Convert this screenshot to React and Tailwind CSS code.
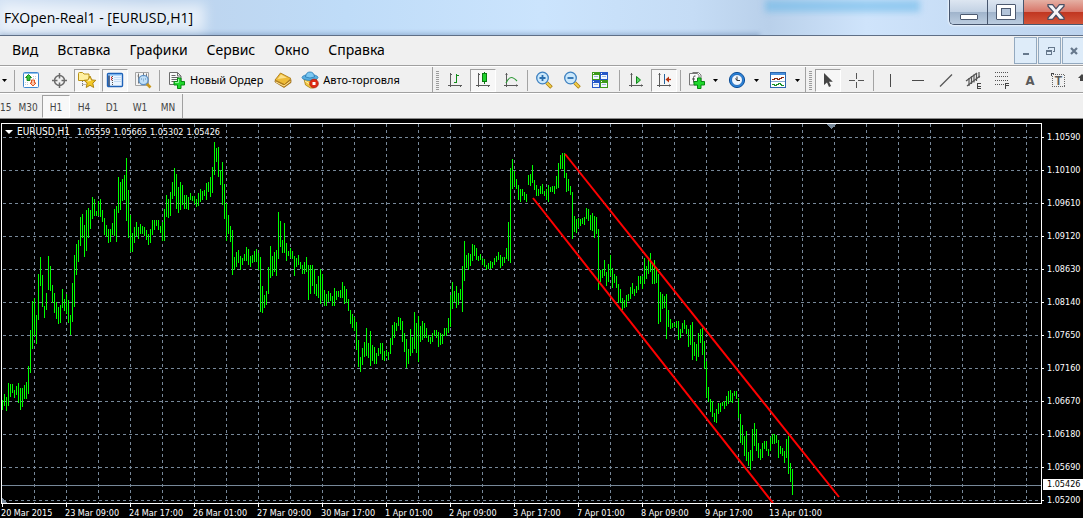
import React from "react";

const MENU = ["Вид", "Вставка", "Графики", "Сервис", "Окно", "Справка"];
const TIMEFRAMES = ["M30", "H1", "H4", "D1", "W1", "MN"];

const PRICES = [
  "1.10590", "1.10100", "1.09610", "1.09120", "1.08630", "1.08140",
  "1.07650", "1.07160", "1.06670", "1.06180", "1.05690", "1.05200",
];

const DATES = [
  "20 Mar 2015", "23 Mar 09:00", "24 Mar 17:00", "26 Mar 01:00", "27 Mar 09:00",
  "30 Mar 17:00", "1 Apr 01:00", "2 Apr 09:00", "3 Apr 17:00", "7 Apr 01:00",
  "8 Apr 09:00", "9 Apr 17:00", "13 Apr 01:00",
];

// high-low of every bar, in pixels below the top of the window
const CHART_TOP = 124;
const BARS = `
400-410 394-406 397-411 383-406 384-397 384-393 390-398 386-395 383-403 388-410
388-407 385-399 382-399 366-394 330-373 301-349 298-336 315-344 274-320 257-286
275-307 306-318 293-310 256-290 266-291 285-303 293-313 302-319 307-324 305-323
289-308 299-311 294-314 300-323 315-335 283-322 255-307 244-275 240-262 217-246
214-238 225-257 210-251 208-238 210-229 197-219 199-216 211-216 201-216 199-217
210-222 218-235 225-237 229-243 229-242 223-235 209-236 206-242 177-213 182-210
179-201 175-200 158-221 190-238 215-252 233-252 227-243 222-236 227-239 224-234
226-234 227-236 230-240 234-245 229-243 220-235 220-230 220-226 220-230 226-233
222-241 209-241 195-217 199-218 192-216 182-199 168-196 174-209 187-213 182-210
185-205 195-209 195-209 197-210 193-200 196-201 196-204 199-207 193-206 189-202
191-200 190-196 183-200 182-192 177-197 167-193 142-175 148-162 147-177 170-185
162-205 184-219 203-241 215-234 226-242 230-275 257-270 252-267 250-263 256-270
258-265 254-261 247-261 249-265 256-267 255-263 251-262 249-262 253-270 257-312
286-313 295-308 291-305 267-294 246-278 256-276 252-272 250-276 212-259 221-247
240-253 223-253 243-261 251-256 248-258 251-259 256-276 258-267 255-265 262-269
265-274 262-274 257-272 265-300 265-294 265-286 269-294 284-296 276-298 269-304
274-300 290-306 294-306 291-302 293-301 296-306 288-306 291-300 291-297 290-298
282-298 286-304 289-303 299-311 310-324 314-328 317-331 322-350 340-367 357-372
348-365 342-357 328-356 343-358 331-366 345-361 347-364 353-364 348-356 343-354
343-360 351-361 350-356 352-360 338-354 325-345 322-338 323-331 317-326 318-330
321-342 333-352 339-368 349-364 329-356 337-353 312-349 323-353 316-362 326-342
321-340 323-338 328-338 335-342 337-344 333-342 330-336 330-338 332-347 333-345
334-344 328-336 328-336 318-333 295-327 282-309 291-302 286-308 293-305 289-300
266-312 241-281 255-268 253-270 254-266 244-261 245-256 248-260 256-261 254-260
258-265 259-267 265-270 263-269 261-269 262-268 258-265 256-262 252-260 255-268
257-266 257-263 248-259 222-261 168-263 159-189 171-186 179-189 185-200 189-202
189-196 192-200 194-202 175-185 174-186 165-183 180-190 185-196 189-196 186-194
184-194 191-196 189-200 185-202 187-192 186-192 186-194 176-189 163-188 155-169
153-169 153-178 173-192 179-191 186-195 192-239 216-232 219-233 218-228 219-226
218-224 217-225 208-219 209-221 215-230 213-231 216-238 217-234 229-290 270-282
269-278 260-276 272-286 264-282 255-276 268-288 274-283 276-288 284-303 289-303
298-310 300-308 295-307 294-301 287-299 283-294 289-296 286-293 276-290 276-284
276-289 258-284 266-279 258-274 253-272 264-284 260-284 267-283 274-324 292-322
294-309 296-308 294-339 310-327 319-329 323-328 323-327 321-328 321-340 329-338
323-333 320-329 325-334 329-347 325-345 322-360 342-356 344-361 333-357 329-343
328-355 341-369 361-398 387-402 399-412 401-417 413-422 409-423 403-414 403-412
402-406 401-409 396-406 391-404 390-402 393-403 391-396 391-399 398-418 414-443
425-445 436-456 431-461 452-466 450-470 429-461 423-446 429-451 443-458 449-460
443-458 441-449 441-451 449-456 437-451 434-444 434-444 435-443 440-458 446-454
448-456 451-463 439-458 436-474 463-482 469-495`
  .trim()
  .split(/\s+/)
  .map((bar) => bar.split("-").map((y) => Number(y) - CHART_TOP));

function Svg({ children, crisp }) {
  return (
    <svg className="block h-[18px] w-[18px] shrink-0" viewBox="0 0 18 18" fill="none" shapeRendering={crisp ? "crispEdges" : "auto"}>
      {children}
    </svg>
  );
}

/* ---------- toolbar icons ---------- */

const MarketWatch = () => (
  <Svg>
    <rect x="1.5" y="1.5" width="15" height="15" rx="1" fill="#fff" stroke="#3f87cf" />
    <path d="M2 2.500h14" stroke="#8fc1ee" />
    <path d="M11 5.500h4M11 7.500h4M3 11.500h3M3 13.500h3" stroke="#c4cdd6" strokeDasharray="1 1" />
    <path d="M6.500 3.500l3 3H8v3H5v-3H3.500z" fill="#3cc43c" stroke="#0c7f12" strokeWidth=".9" />
    <path d="M11 15l-3-3h1.500V9h3v3H14z" fill="#ffc4a4" stroke="#e04a12" strokeWidth=".9" />
  </Svg>
);

const Target = () => (
  <Svg>
    <circle cx="9.500" cy="9.500" r="5" stroke="#6a6a6a" strokeWidth="1.5" />
    <path d="M9.500 2v5.500M9.500 11.500V17M2 9.500h5.500M11.500 9.500H17" stroke="#6a6a6a" strokeWidth="1.5" />
  </Svg>
);

const FolderStar = () => (
  <Svg>
    <path d="M.5 2.500q0-1 1-1h3l1.500 1.500h5v6.500H.5z" fill="#fff0a0" stroke="#b99316" />
    <path d="M4.500 10v6M4.500 13.500h3" stroke="#777" strokeDasharray="1 1" />
    <path d="M12 5l1.800 3.900 4 .4-3 2.900.9 4.300-3.700-2.200-3.800 2.200.9-4.300-3-2.900 4.100-.4z" fill="#f4c928" stroke="#a87d08" strokeWidth=".9" />
    <path d="M12 7l1 3-4 .5z" fill="#fff3b0" />
  </Svg>
);

const Navigator = () => (
  <Svg>
    <rect x="1.500" y="2.500" width="15" height="13" rx="1" fill="#eaf4ff" stroke="#1e62b8" strokeWidth="1.400" />
    <path d="M2.500 3.800h13" stroke="#6caef0" strokeWidth="1.300" />
    <path d="M3 4.500v10.500" stroke="#2a4a78" strokeWidth="1.600" />
    <path d="M6.500 5v10" stroke="#555" strokeDasharray="1 1" />
    <path d="M5 6.500h1M5 8.500h1" stroke="#d22" strokeWidth="1.300" />
    <path d="M8 6.500h7M8 8.500h7M8 10.500h7" stroke="#c3dcf5" />
  </Svg>
);

const Tester = () => (
  <Svg>
    <path d="M1.500 1.500h13v13h-13z" fill="#f4f4f4" stroke="#a4a4a4" />
    <path d="M4.500 2.500v10M3.500 5h1M4.500 9h1.500M9.500 2v4M12.500 2.500v3" stroke="#777" />
    <path d="M12.500 12.500l4 4" stroke="#c9971c" strokeWidth="2.600" />
    <circle cx="9.500" cy="9" r="4.600" fill="#b7dcf8" fillOpacity=".85" stroke="#5c8fc4" strokeWidth="1.300" />
    <path d="M7.500 9V7M9.500 10.500V7.500M11.500 9V7" stroke="#8cb4d8" />
  </Svg>
);

const NewOrder = () => (
  <Svg>
    <path d="M1.500 1.500h8l3.500 3.500v8.500h-11.500z" fill="#fafafa" stroke="#6c6c6c" />
    <path d="M9.500 1.500v3.500h3.500" stroke="#6c6c6c" />
    <path d="M3.500 4.500h4M3.500 6.500h7M3.500 8.500h7M3.500 10.500h4" stroke="#666" />
    <path d="M9.500 7h3.500v3.500h3.500v3.500h-3.500v3.500h-3.500v-3.500h-3.500v-3.500h3.500z" fill="#1fd82d" stroke="#078a12" />
    <path d="M10.500 8v3.500h-3.500" stroke="#9cf7a2" />
  </Svg>
);

const GoldBook = () => (
  <Svg>
    <path d="M1 9.500l9 4 7-5v3l-7 5-9-5.500z" fill="#c98d18" stroke="#8c5c08" strokeWidth=".7" />
    <path d="M1.500 10.800l8.500 4.200 6.500-4.800" stroke="#ffe9a8" />
    <path d="M1 9l5.500-7 10.500 5.500-6.500 6z" fill="#eebb38" stroke="#a5720c" strokeWidth=".8" />
    <path d="M3.500 8l3.500-4.500 6 3.200z" fill="#fbe08a" />
  </Svg>
);

const Expert = () => (
  <Svg>
    <path d="M3 8l1.500 6 5 3h3l2-3 1-6z" fill="#f2c640" stroke="#a87c10" strokeWidth=".8" />
    <path d="M4 10l4 2.500 7-2" stroke="#fff0b0" />
    <ellipse cx="9" cy="6.500" rx="8" ry="2.900" fill="#58aee0" stroke="#2478b4" strokeWidth=".8" />
    <path d="M4.500 6q.5-5 4.500-5t4.500 5q-4.500 2-9 0z" fill="#7cc8f2" stroke="#2478b4" strokeWidth=".8" />
    <circle cx="13" cy="12.500" r="4.400" fill="#dd2b15" stroke="#a51b0a" strokeWidth=".6" />
    <rect x="11.500" y="11" width="3" height="3" fill="#fff" />
  </Svg>
);

const Axes = () => (
  <path d="M4.500 2v14M2 14.500h14M3.500 3.500h2M14.500 13.500v2" stroke="#5a5a5a" />
);

const BarChart = () => (
  <Svg crisp>
    <Axes />
    <path d="M10.500 3v9M10.500 4.500h2M8 11.500h2.500" stroke="#118a18" />
  </Svg>
);

const CandleChart = () => (
  <Svg crisp>
    <Axes />
    <path d="M10.500 1v12" stroke="#0a7a12" />
    <rect x="8.500" y="2.500" width="4" height="8" fill="#1fd12b" stroke="#0a7a12" />
  </Svg>
);

const LineChart = () => (
  <Svg>
    <Axes />
    <path d="M4 12q2.500-5.500 5.500-5.500 2 0 5.500 3.500" stroke="#2f9a38" strokeWidth="1.200" />
  </Svg>
);

const Magnifier = ({ plus }) => (
  <Svg>
    <path d="M11.500 11.500l5 5" stroke="#a97c0e" strokeWidth="3.600" />
    <path d="M11.500 11.500l4.500 4.500" stroke="#f3cf4a" strokeWidth="2" />
    <circle cx="7.500" cy="7" r="5.800" fill="#cbe8fb" stroke="#3d80c0" strokeWidth="1.300" />
    <path d={plus ? "M4.500 7h6M7.500 4v6" : "M4.500 7h6"} stroke="#2a6eae" strokeWidth="1.800" />
  </Svg>
);

const Tiles = () => (
  <Svg crisp>
    <path d="M1 1h8v8H1zM9 9h8v8H9z" fill="#3c9a1c" />
    <path d="M9 1h8v8H9zM1 9h8v8H1z" fill="#2458c8" />
    <path d="M2 4h6v4H2zM10 4h6v4h-6zM2 12h6v4H2zM10 12h6v4h-6z" fill="#f3f8ff" />
    <path d="M3 5.500h4M11 5.500h4M3 13.500h4M11 13.500h4" stroke="#9ab8d8" />
    <path d="M2 2.500h1M10 2.500h1M2 10.500h1M10 10.500h1" stroke="#fff" />
  </Svg>
);

const AutoScroll = () => (
  <Svg>
    <Axes />
    <path d="M9.500 5.500l4 3.500-4 3.500z" fill="#58d860" stroke="#0e8418" />
  </Svg>
);

const ChartShift = () => (
  <Svg>
    <Axes />
    <path d="M9.500 3v10" stroke="#24639c" />
    <path d="M16 8.500h-3" stroke="#b8320e" strokeWidth="1.300" />
    <path d="M10.500 8.500l3.500-3v6z" fill="#b8320e" />
  </Svg>
);

const Indicators = () => (
  <Svg>
    <path d="M4.500 1.500h6l2.500 2.500v9h-8.500" fill="#fff" stroke="#777" />
    <path d="M1.500 2.500h8l1.500 2v9.500h-9.500z" fill="#fafafa" stroke="#777" />
    <path d="M7.500 5q-2-.5-2 1.500v5M4 8h3" stroke="#555" />
    <path d="M9.500 7h3.500v3.500h3.500v3.500h-3.500v3.500h-3.500v-3.500h-3.500v-3.500h3.500z" fill="#1fd82d" stroke="#078a12" />
  </Svg>
);

const Clock = () => (
  <Svg>
    <circle cx="9" cy="9" r="7.600" fill="#2b86dc" stroke="#0e4d96" />
    <circle cx="9" cy="9" r="5.500" fill="#f0f7ff" stroke="#0f58ac" strokeWidth=".8" />
    <path d="M9 5.500v4h3M7.500 7.500l1.500 2" stroke="#333" />
  </Svg>
);

const Template = () => (
  <Svg crisp>
    <rect x="1.500" y="1.500" width="15" height="15" fill="#fff" stroke="#2c66ac" />
    <path d="M2 3h14" stroke="#4a90dc" strokeWidth="2" />
    <path d="M2 10.500h14" stroke="#8fb0d4" />
    <path d="M3 8.500h2v-1h3v1h2v-1h2v-1h3" stroke="#8c2a10" />
    <path d="M3 13.500h2v1h2v-1h2v-1h2v1h1.500v1h2" stroke="#1c9428" />
  </Svg>
);

const Cursor = () => (
  <Svg>
    <path d="M5 2v12l3-2.500 2 4.500 2-1-2-4.200h3.800z" fill="#454545" />
  </Svg>
);

const Cross = () => (
  <Svg crisp>
    <path d="M9.500 2v6M9.500 11v6M2 9.500h6M11 9.500h6" stroke="#555" />
  </Svg>
);

const VLine = () => (
  <Svg crisp><path d="M9.500 3v13" stroke="#4a4a4a" /></Svg>
);
const HLine = () => (
  <Svg crisp><path d="M3 9.500h12" stroke="#4a4a4a" /></Svg>
);
const Trend = () => (
  <Svg><path d="M3 15.500l12-12" stroke="#555" strokeWidth="1.200" /></Svg>
);

const Channel = () => (
  <Svg>
    <path d="M1 10l11-8M2 15l13-10" stroke="#555" strokeWidth="1.200" />
    <path d="M4 7v8M6.500 5v8M9 3.500v8M11.500 2v8M14 1v6" stroke="#555" strokeWidth="1.200" />
    <path d="M16 12.500h-3.500v5h3.500M13 15h3" stroke="#444" shapeRendering="crispEdges" />
  </Svg>
);

const Fibo = () => (
  <Svg crisp>
    <path d="M2 1.500h14M2 5.500h14M2 9.500h14M2 13.500h9" stroke="#555" strokeDasharray="1 1" />
    <path d="M16 12.500h-3.500v5M13 14.500h2.500" stroke="#444" />
  </Svg>
);

const TextTool = () => (
  <Svg>
    <text x="9" y="14" textAnchor="middle" fontSize="13" fontWeight="bold" fontFamily="DejaVu Sans Condensed, sans-serif" fill="#5a5a5a">A</text>
  </Svg>
);

const LabelTool = () => (
  <Svg crisp>
    <rect x="3.500" y="3.500" width="12" height="12" stroke="#666" strokeDasharray="1 1" />
    <path d="M2 2.500h3M2.500 2v3" stroke="#444" />
    <text x="9.500" y="14" textAnchor="middle" fontSize="12" fontWeight="bold" fontFamily="Liberation Sans, sans-serif" fill="#5a5a5a">T</text>
  </Svg>
);

const Arrows = () => (
  <Svg>
    <path d="M5 3l4 4H7v3H3V7H1z" fill="#444" />
  </Svg>
);

/* ---------- toolbar parts ---------- */

function ToolButton({ label, pressed, children }) {
  return (
    <button type="button" title={label} aria-label={label} aria-pressed={pressed} className="flex h-6 w-7 shrink-0 items-center justify-center">
      <span
        className={
          pressed
            ? "flex h-[23px] w-[26px] items-center justify-center border border-t-[#a0a0a0] border-l-[#a0a0a0] border-r-white border-b-white bg-[#f7f7f7]"
            : "flex h-[23px] w-[26px] items-center justify-center"
        }
      >
        {children}
      </span>
    </button>
  );
}

function Caret({ label }) {
  return (
    <button type="button" aria-label={label} className="flex h-6 w-2 shrink-0 items-center justify-center">
      <svg className="h-[3px] w-[5px]" viewBox="0 0 5 3">
        <path d="M0 0h5L2.500 3z" fill="#000" />
      </svg>
    </button>
  );
}

const Separator = () => <span className="mx-[2px] h-[21px] w-px shrink-0 bg-[#a3a3a3]" />;

const Grip = () => (
  <span className="ml-[3px] mr-[2px] h-[19px] w-[3px] shrink-0 bg-[repeating-linear-gradient(to_bottom,#9c9c9c_0_1px,#f0f0f0_1px_2px)]" />
);

function Toolbar() {
  return (
    <div className="flex h-[27px] items-center overflow-hidden border-b border-[#a0a0a0] border-t border-t-white bg-[#f0f0f0] font-['Noto_Sans',sans-serif] text-[11px] text-black">
      <div className="flex h-full w-[433px] shrink-0 items-center border-r border-[#a0a0a0] pt-px">
        <Caret label="Профили" />
        <span className="w-1" />
        <Separator />
        <ToolButton label="Обзор рынка"><MarketWatch /></ToolButton>
        <ToolButton label="Окно данных"><Target /></ToolButton>
        <ToolButton label="Навигатор" pressed><FolderStar /></ToolButton>
        <ToolButton label="Терминал" pressed><Navigator /></ToolButton>
        <ToolButton label="Тестер"><Tester /></ToolButton>
        <Separator />
        <button type="button" className="ml-1.5 flex h-6 shrink-0 items-center gap-1 whitespace-nowrap">
          <NewOrder />
          Новый Ордер
        </button>
        <span className="w-1.5" />
        <ToolButton label="MetaEditor"><GoldBook /></ToolButton>
        <button type="button" className="ml-1 flex h-6 shrink-0 items-center gap-1 whitespace-nowrap">
          <Expert />
          Авто-торговля
        </button>
      </div>
      <div className="flex h-full shrink-0 items-center border-r border-[#a0a0a0] pt-px pr-1">
        <Grip />
        <ToolButton label="Бары"><BarChart /></ToolButton>
        <ToolButton label="Свечи" pressed><CandleChart /></ToolButton>
        <ToolButton label="Линия"><LineChart /></ToolButton>
        <Separator />
        <ToolButton label="Увеличить"><Magnifier plus /></ToolButton>
        <ToolButton label="Уменьшить"><Magnifier /></ToolButton>
        <ToolButton label="Расположить окна"><Tiles /></ToolButton>
        <span className="w-[3px]" />
        <Separator />
        <ToolButton label="Автопрокрутка"><AutoScroll /></ToolButton>
        <ToolButton label="Сдвиг графика" pressed><ChartShift /></ToolButton>
        <Separator />
        <ToolButton label="Индикаторы"><Indicators /></ToolButton>
        <Caret label="Список индикаторов" />
        <span className="w-1" />
        <ToolButton label="Периоды"><Clock /></ToolButton>
        <span className="w-px" />
        <Caret label="Список периодов" />
        <span className="w-1" />
        <ToolButton label="Шаблоны"><Template /></ToolButton>
        <span className="w-px" />
        <Caret label="Список шаблонов" />
      </div>
      <div className="flex h-full shrink-0 items-center pt-px">
        <Grip />
        <ToolButton label="Курсор" pressed><Cursor /></ToolButton>
        <ToolButton label="Перекрестие"><Cross /></ToolButton>
        <span className="w-px" />
        <Separator />
        <ToolButton label="Вертикальная линия"><VLine /></ToolButton>
        <ToolButton label="Горизонтальная линия"><HLine /></ToolButton>
        <ToolButton label="Трендовая линия"><Trend /></ToolButton>
        <ToolButton label="Канал"><Channel /></ToolButton>
        <ToolButton label="Фибоначчи"><Fibo /></ToolButton>
        <ToolButton label="Текст"><TextTool /></ToolButton>
        <ToolButton label="Метка"><LabelTool /></ToolButton>
        <ToolButton label="Стрелки"><Arrows /></ToolButton>
      </div>
    </div>
  );
}

function TitleBar() {
  return (
    <header className="relative flex h-9 items-start justify-between overflow-hidden border-b border-[#5f6f86] bg-[linear-gradient(90deg,#d3e2f4_0%,#bdd3ec_14%,#bfdcf8_32%,#cbe4fd_50%,#c5dcf5_64%,#b9d0ea_71%,#cfe4fb_80%,#bcd3ee_100%)]">
      <div className="absolute left-0 top-[33px] h-2 w-[760px] bg-[#5d7ea8]/40 blur-[2px]" />
      <div className="absolute left-[765px] top-0 h-3 w-[155px] bg-[#5cb4e8]/50 blur-[3px]" />
      <div className="absolute left-0 top-1 h-7 w-[205px] bg-white/60 blur-[6px]" />
      <h1 className="relative pl-1 pt-[7px] font-['Open_Sans','Noto_Sans',sans-serif] text-[14px] leading-[22px] whitespace-nowrap text-black">
        FXOpen-Real1 - [EURUSD,H1]
      </h1>
      <div className="relative flex h-[25px] shrink-0 overflow-hidden rounded-bl-[5px] border-b border-l border-[#47566e] shadow-[0_0_2px_1px_#ffffffb0]">
        <button type="button" aria-label="Свернуть" className="flex w-[38px] items-end justify-center border-r border-[#47566e] bg-[linear-gradient(#dde6f1_0%,#c3d2e4_48%,#9fb3cb_50%,#bccde0_100%)] pb-1">
          <span className="h-[6px] w-[18px] rounded-[1px] border border-[#4d5a70] bg-white" />
        </button>
        <button type="button" aria-label="Развернуть" className="flex w-9 items-center justify-center border-r border-[#47566e] bg-[linear-gradient(#dde6f1_0%,#c3d2e4_48%,#9fb3cb_50%,#bccde0_100%)]">
          <span className="flex h-4 w-5 items-center justify-center rounded-[1px] border border-[#4d5a70] bg-white">
            <span className="h-2 w-[10px] border border-[#4d5a70] bg-[#b4c5da]" />
          </span>
        </button>
        <button type="button" aria-label="Закрыть" className="flex w-[59px] items-center justify-center bg-[linear-gradient(#e5b0a4_0%,#d8776a_48%,#c03520_50%,#d4553a_100%)] pl-1">
          <svg className="h-4 w-[18px]" viewBox="0 0 18 16">
            <path d="M1 .7h4.600L9 4.800 12.400.7H17v1.500L11.700 8l5.300 5.800v1.500h-4.600L9 11.200l-3.400 4.100H1v-1.500L6.300 8 1 2.200z" fill="#f6f6f8" stroke="#4a4f63" strokeWidth="1.300" />
          </svg>
        </button>
      </div>
    </header>
  );
}

function MdiButton({ label, children }) {
  return (
    <button type="button" aria-label={label} className="flex h-[27px] w-[23px] items-center justify-center border border-[#93a9bf] bg-[#deecf9]">
      <svg className="h-3 w-3" viewBox="0 0 12 12" fill="none" stroke="#66788c">
        {children}
      </svg>
    </button>
  );
}

function MenuBar() {
  return (
    <nav className="flex h-[30px] items-center justify-between border-b border-[#a0a0a0] bg-[#f0f0f0] pl-[2px]">
      <div className="flex pb-px font-['Noto_Sans',sans-serif] text-[14px] leading-5 text-black">
        {MENU.map((item) => (
          <button key={item} type="button" className="pr-[9px] pl-2.5">{item}</button>
        ))}
      </div>
      <div className="-mr-[2px] flex gap-px">
        <MdiButton label="Свернуть окно"><path d="M3 9h6" strokeWidth="2" /></MdiButton>
        <MdiButton label="Восстановить окно">
          <path d="M4.500 4V2.500h6v4H9M4 2.500h7M2 6h6M2.500 5.500h5v4h-5z" shapeRendering="crispEdges" />
        </MdiButton>
        <MdiButton label="Закрыть окно"><path d="M3 3l6 6M9 3l-6 6" strokeWidth="2.200" /></MdiButton>
      </div>
    </nav>
  );
}

function Timeframes() {
  return (
    <div className="flex h-[26px] items-center overflow-hidden border-b border-[#8a8a8a] border-t border-t-white bg-[#f0f0f0] font-['DejaVu_Sans_Condensed','Noto_Sans',sans-serif] text-[10px] text-[#444]">
      <div className="flex h-full items-center border-r border-[#a0a0a0]">
        <button type="button" aria-label="M15" className="flex h-[23px] w-3.5 items-center pt-[2px]">15</button>
        {TIMEFRAMES.map((tf) => (
          <button
            key={tf}
            type="button"
            aria-pressed={tf === "H1"}
            className={
              tf === "H1"
                ? "flex h-[23px] w-7 items-center justify-center border border-t-[#a0a0a0] border-l-[#a0a0a0] border-r-white border-b-white bg-[#f8f8f8] pt-[2px]"
                : "flex h-[23px] w-7 items-center justify-center pt-[2px]"
            }
          >
            {tf}
          </button>
        ))}
      </div>
    </div>
  );
}

function Plot() {
  return (
    <svg className="block h-[379px] w-full" shapeRendering="crispEdges">
      <g stroke="#778899" strokeDasharray="3 3">
        {Array.from({ length: 60 }, (_, i) => (
          <line key={i} x1={32.5 + i * 32} x2={32.5 + i * 32} y1="0" y2="379" />
        ))}
        {PRICES.map((price, i) => (
          <line key={price} x1="1" x2="100%" y1={13.5 + i * 33} y2={13.5 + i * 33} />
        ))}
      </g>
      <line x1="0" x2="100%" y1="361.5" y2="361.5" stroke="#778899" />
      <path d="M824 0h10l-5 5z" fill="#778899" />
      <path d="M0 374l5 5H0z" fill="#778899" />
      {BARS.map(([high, low], i) => (
        <rect key={i} x={i * 2} y={high} width="1" height={low - high} fill="#00ff00" />
      ))}
      <g stroke="#ff0000" strokeWidth="2" shapeRendering="auto">
        <line x1="563" y1="30" x2="837" y2="373" />
        <line x1="531" y1="74" x2="771" y2="379" />
      </g>
    </svg>
  );
}

function Chart() {
  return (
    <main className="relative flex bg-black pl-px font-['DejaVu_Sans_Condensed','Noto_Sans',sans-serif] text-[9px] text-white">
      <div className="min-w-0 flex-1 overflow-hidden pt-1">
        <div className="border border-white">
          <Plot />
        </div>
        <div className="flex">
          {DATES.map((date) => (
            <div key={date} className="w-16 shrink-0 whitespace-nowrap">
              <div className="ml-px h-[3px] w-px bg-white" />
              <div className="leading-[12px]">{date}</div>
            </div>
          ))}
        </div>
      </div>
      <div className="relative w-[41px] shrink-0 pt-[2px]">
        {PRICES.map((price) => (
          <div key={price} className="flex h-[33px] items-center gap-[3px]">
            <span className="h-px w-[2px] bg-white" />
            {price}
          </div>
        ))}
        <div className="absolute top-[360px] right-0 h-[11px] w-10 bg-white pl-1 leading-[11px] text-black">1.05426</div>
      </div>
      <div className="absolute left-[5px] top-[7px] flex items-center gap-1 leading-[12px] whitespace-nowrap">
        <svg className="h-1 w-2" viewBox="0 0 8 4">
          <path d="M0 0h8L4 4z" fill="#fff" />
        </svg>
        <span className="w-14 text-[10px]">EURUSD,H1</span>
        <span className="flex gap-[3px]">
          <span>1.05559</span>
          <span>1.05665</span>
          <span>1.05302</span>
          <span>1.05426</span>
        </span>
      </div>
    </main>
  );
}

export default function App() {
  return (
    <div className="w-full overflow-hidden bg-black">
      <TitleBar />
      <MenuBar />
      <Toolbar />
      <Timeframes />
      <Chart />
    </div>
  );
}
